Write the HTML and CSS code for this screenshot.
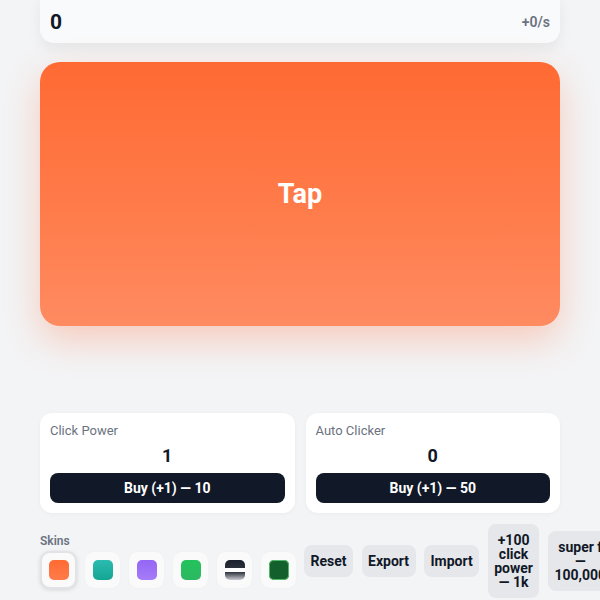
FILE: index.html
```html
<!DOCTYPE html>
<html lang="en">
<head>
<meta charset="utf-8">
<title>Tapper</title>
<link rel="stylesheet" href="styles.css">
</head>
<body>
<div class="app">
  <header class="topbar">
    <span class="score">0</span>
    <span class="rate">+0/s</span>
  </header>

  <button class="tap">Tap</button>

  <section class="upgrades">
    <div class="card">
      <div class="card-title">Click Power</div>
      <div class="card-value">1</div>
      <button class="buy">Buy (+1) — 10</button>
    </div>
    <div class="card">
      <div class="card-title">Auto Clicker</div>
      <div class="card-value">0</div>
      <button class="buy">Buy (+1) — 50</button>
    </div>
  </section>

  <section class="bottom">
    <div class="skins">
      <div class="skins-label">Skins</div>
      <div class="skin-list">
        <button class="skin selected"><span class="swatch sw-orange"></span></button>
        <button class="skin"><span class="swatch sw-teal"></span></button>
        <button class="skin"><span class="swatch sw-purple"></span></button>
        <button class="skin"><span class="swatch sw-green"></span></button>
        <button class="skin"><span class="swatch sw-mono"></span></button>
        <button class="skin"><span class="swatch sw-forest"></span></button>
      </div>
    </div>
    <button class="act">Reset</button>
    <button class="act">Export</button>
    <button class="act">Import</button>
    <button class="act">+100 click power — 1k</button>
    <button class="act">super f — 100,000</button>
  </section>
</div>
</body>
</html>
```
FILE: styles.css
```css
* { box-sizing: border-box; }

html, body {
  margin: 0;
  padding: 0;
  background: #f3f4f6;
  overflow: hidden;
}

body {
  font-family: Roboto, "Liberation Sans", Arial, sans-serif;
  color: #111827;
}

.app {
  width: 520px;
  margin: -10px 40px 0;
}

button {
  font-family: inherit;
  border: none;
  cursor: pointer;
}

.topbar {
  display: flex;
  justify-content: space-between;
  align-items: center;
  padding: 20px 10px 9px;
  height: 53px;
  background: #f9fafb;
  border-radius: 14px;
  box-shadow: 0 6px 14px rgba(0, 0, 0, 0.06);
}

.score {
  font-size: 21px;
  font-weight: 700;
  line-height: 24px;
}

.rate {
  font-size: 14px;
  font-weight: 600;
  color: #6b7280;
  line-height: 24px;
}

.tap {
  display: block;
  width: 100%;
  height: 264px;
  margin-top: 19px;
  border-radius: 20px;
  background: linear-gradient(180deg, #ff6a33 0%, #ff7b4a 55%, #ff8b61 100%);
  color: #ffffff;
  font-size: 27px;
  font-weight: 700;
  box-shadow: 0 14px 36px rgba(255, 107, 53, 0.3);
}

.upgrades {
  display: grid;
  grid-template-columns: 1fr 1fr;
  gap: 11px;
  margin-top: 87px;
}

.card {
  background: #ffffff;
  border-radius: 12px;
  padding: 10px;
  display: flex;
  flex-direction: column;
  gap: 6px;
  box-shadow: 0 1px 4px rgba(0, 0, 0, 0.04);
}

.card-title {
  font-size: 13px;
  color: #6b7280;
  line-height: 16px;
}

.card-value {
  text-align: center;
  font-size: 18px;
  font-weight: 700;
  line-height: 22px;
}

.buy {
  height: 30px;
  border-radius: 8px;
  background: #111827;
  color: #ffffff;
  font-size: 14px;
  font-weight: 700;
}

.bottom {
  display: flex;
  flex-wrap: nowrap;
  align-items: center;
  gap: 8.5px;
  margin-top: 11px;
  width: max-content;
}

.skins {
  display: flex;
  flex-direction: column;
  gap: 3px;
  margin-right: -1.5px;
}

.skins-label {
  font-size: 12px;
  font-weight: 600;
  color: #6b7280;
  line-height: 14px;
}

.skin-list {
  display: flex;
  gap: 7px;
}

.skin {
  width: 37px;
  height: 38px;
  padding: 0;
  display: flex;
  align-items: center;
  justify-content: center;
  background: #fafafa;
  border: 1px solid #f1f2f4;
  border-radius: 10px;
}

.skin.selected {
  border: 2px solid #e2e3e6;
  box-shadow: 0 1px 4px rgba(0, 0, 0, 0.12);
}

.swatch {
  display: block;
  width: 20px;
  height: 20px;
  border-radius: 5px;
}

.sw-orange { background: linear-gradient(180deg, #ff6a33, #ff7c4b); }
.sw-teal { background: linear-gradient(180deg, #2bbcb0, #14a594); }
.sw-purple { background: linear-gradient(180deg, #9466f5, #a57cf8); }
.sw-green { background: linear-gradient(180deg, #22c35c, #2cb862); }
.sw-mono {
  background: linear-gradient(180deg, #1a1f2c 0%, #2a2f3a 40%, #ffffff 42%, #ffffff 58%, #2c313b 60%, #c9cbd0 100%);
}
.sw-forest {
  background: #14602d;
  box-shadow: inset 0 0 0 1px #4fb86a;
}

.act {
  width: min-content;
  padding: 9px 6.5px;
  background: #e5e7eb;
  color: #111827;
  border-radius: 8px;
  font-size: 14px;
  font-weight: 700;
  line-height: 14px;
  text-align: center;
  flex-shrink: 0;
}
```
